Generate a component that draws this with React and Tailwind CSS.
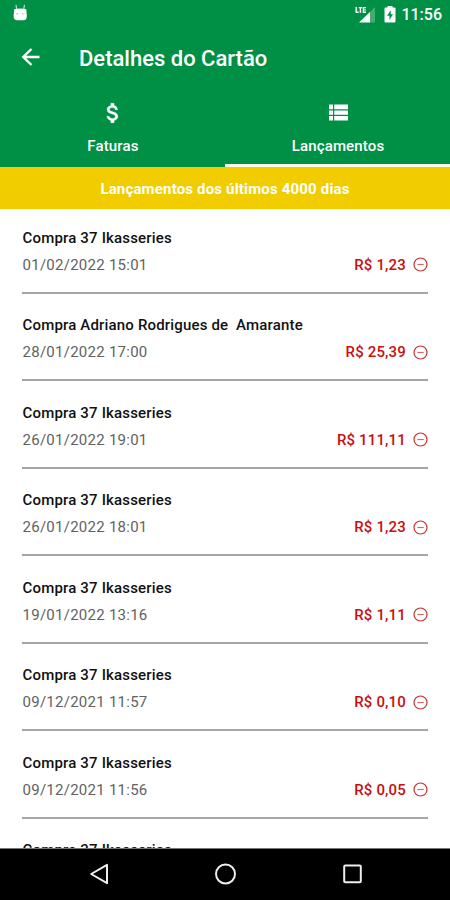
import React from "react";

const entries = [
  { title: "Compra 37 Ikasseries", date: "01/02/2022 15:01", value: "R$ 1,23" },
  { title: "Compra Adriano Rodrigues de  Amarante", date: "28/01/2022 17:00", value: "R$ 25,39" },
  { title: "Compra 37 Ikasseries", date: "26/01/2022 19:01", value: "R$ 111,11" },
  { title: "Compra 37 Ikasseries", date: "26/01/2022 18:01", value: "R$ 1,23" },
  { title: "Compra 37 Ikasseries", date: "19/01/2022 13:16", value: "R$ 1,11" },
  { title: "Compra 37 Ikasseries", date: "09/12/2021 11:57", value: "R$ 0,10" },
  { title: "Compra 37 Ikasseries", date: "09/12/2021 11:56", value: "R$ 0,05" },
  { title: "Compra 37 Ikasseries" },
];

function StatusBar() {
  return (
    <div className="flex h-7 shrink-0 items-center pl-[13px] pr-2">
      <svg width="15" height="18" viewBox="0 0 15 18" className="-mt-1">
        <path d="M3.6 6 3 1.800M10.800 6l.7-4.200" stroke="#b9dfc8" strokeWidth="1.2" />
        <path d="M1.2 6.200Q7.300 4.600 13.300 6.200L13.800 13Q13.800 17.300 10.500 17.300H4.500Q.6 17.300 .6 13Z" fill="#fff" />
        <circle cx="4.200" cy="10.800" r=".7" fill="#68b889" />
        <path d="M8.800 10.900h2.600" stroke="#a5d5b8" />
      </svg>
      <div className="ml-auto flex items-center">
        <svg width="21" height="18" viewBox="0 0 21 18" className="-mt-px mr-2">
          <path d="M20 2v15.500h-5V7z" fill="#46ab70" />
          <path d="M15 7v10.500H4z" fill="#fff" />
          <path d="M1.200 2v5.200h2.500M3.700 2.600h3.400M5.400 2.600v5.100M11 2.600H8.400v4.600H11M8.400 4.900h2.400" stroke="#fff" strokeWidth="1.400" fill="none" />
        </svg>
        <svg width="12" height="18" viewBox="0 0 12 18" className="-mt-px mr-[5px]">
          <path d="M3.500 1h5v1.500H10.500q1 0 1 1v13q0 1-1 1H1.500q-1 0-1-1v-13q0-1 1-1h2z" fill="#fff" />
          <path d="M6.800 5.200 3 10.700h2.500v4.300L9 9.300H6.800z" fill="#009045" />
        </svg>
        <span className="mt-px text-[16px] font-medium leading-7">11:56</span>
      </div>
    </div>
  );
}

function Header() {
  return (
    <header className="flex h-[60px] shrink-0 items-center pl-[21px]">
      <svg width="20" height="20" viewBox="0 0 20 20" className="-mt-0.5" fill="none" stroke="#fff" strokeWidth="2.400">
        <path d="M18.500 10H2.500M10.500 2 2.300 10l8.200 8" />
      </svg>
      <h1 className="ml-[38px] pt-px text-[22px] font-medium leading-7">Detalhes do Cartão</h1>
    </header>
  );
}

function Tabs() {
  return (
    <nav className="grid h-[79px] shrink-0 grid-cols-2 text-[15px] font-medium tracking-[0.16px]">
      <div className="flex flex-col items-center pl-px pt-3">
        <svg width="26" height="26" viewBox="0 0 24 24" fill="#fff" stroke="#fff" strokeWidth=".3">
          <path d="M11.800 10.900c-2.270-.59-3-1.200-3-2.150 0-1.090 1.010-1.850 2.700-1.850 1.780 0 2.440.85 2.500 2.100h2.210c-.07-1.720-1.120-3.300-3.210-3.810V3h-3v2.160c-1.940.42-3.500 1.680-3.500 3.610 0 2.310 1.910 3.460 4.700 4.130 2.500.6 3 1.480 3 2.410 0 .69-.49 1.790-2.700 1.790-2.060 0-2.870-.92-2.980-2.100h-2.200c.12 2.190 1.760 3.420 3.680 3.830V21h3v-2.150c1.950-.37 3.500-1.500 3.500-3.550 0-2.840-2.430-3.810-4.700-4.400z" />
        </svg>
        <span className="mt-2.5 leading-5">Faturas</span>
      </div>
      <div className="flex flex-col items-center border-b-[3px] border-[#f7fbee] pl-px pt-3">
        <svg width="26" height="26" viewBox="0 0 26 26" fill="#fff">
          <path d="M4 4.500h4v4.700H4zM9.200 4.500H23v4.700H9.200zM4 10.400h4v4.400H4zM9.200 10.400H23v4.400H9.200zM4 16h4v4.500H4zM9.200 16H23v4.500H9.200z" />
        </svg>
        <span className="mt-2.5 leading-5">Lançamentos</span>
      </div>
    </nav>
  );
}

function Entry({ title, date, value }) {
  return (
    <li className="flex h-[87.5px] shrink-0 flex-col border-b-2 border-[#a5a5a5] pt-[21.5px]">
      <span className="whitespace-pre pl-[0.5px] text-[15px] font-medium leading-5 tracking-[0.17px] text-[#111]">{title}</span>
      {date && (
        <div className="mt-[7px] flex items-center justify-between leading-5">
          <span className="pl-[0.5px] text-[15px] tracking-[0.26px] text-[#626262]">{date}</span>
          <span className="flex items-center gap-[7px] text-[15px] font-medium tracking-[0.16px] text-[#c80e0e]">
            {value}
            <svg width="15" height="15" viewBox="0 0 15 15" fill="none" stroke="#c92f2f">
              <circle cx="7.500" cy="7.500" r="6.500" strokeWidth="1.200" />
              <path d="M4.300 7.500h6.400" strokeWidth="1.200" stroke="#d66" />
            </svg>
          </span>
        </div>
      )}
    </li>
  );
}

function NavigationBar() {
  return (
    <footer className="grid h-[52px] shrink-0 grid-cols-[1fr_54px_1fr] items-center border-t border-[#777] bg-black">
      <svg width="20" height="24" viewBox="0 0 20 24" className="-mt-0.5 ml-[89px]" fill="none" stroke="#eee" strokeWidth="2">
        <path d="M18 2.800v18.400L2.200 12z" strokeLinejoin="round" />
      </svg>
      <svg width="24" height="24" viewBox="0 0 24 24" className="mx-auto -mt-0.5" fill="none" stroke="#eee" strokeWidth="2">
        <circle cx="12.500" cy="12" r="9.500" />
      </svg>
      <svg width="20" height="20" viewBox="0 0 20 20" className="-mt-0.5 ml-[90px]" fill="none" stroke="#eee" strokeWidth="2">
        <rect x="2.200" y="1.600" width="16.600" height="16.600" rx="1" />
      </svg>
    </footer>
  );
}

export default function App() {
  return (
    <div className="flex h-[900px] w-[450px] flex-col overflow-hidden bg-white font-['Roboto',sans-serif]">
      <div className="flex shrink-0 flex-col bg-[#009045] text-white">
        <StatusBar />
        <Header />
        <Tabs />
      </div>
      <div className="flex h-[42px] shrink-0 items-center justify-center bg-[#f1cd00] pt-0.5 text-[15px] font-bold tracking-[0.17px] text-white">
        Lançamentos dos últimos 4000 dias
      </div>
      <main className="min-h-0 grow overflow-hidden">
        <ul className="-mt-[3px] flex flex-col px-[22px]">
          {entries.map((entry, i) => (
            <Entry key={i} {...entry} />
          ))}
        </ul>
      </main>
      <NavigationBar />
    </div>
  );
}
